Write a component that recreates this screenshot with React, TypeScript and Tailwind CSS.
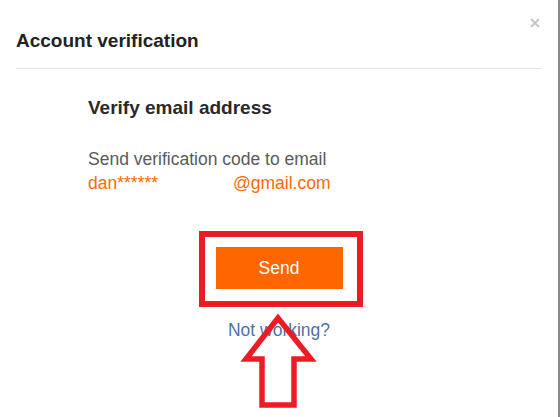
export default function App() {
  return (
    <div className="w-[560px] h-[417px] bg-white font-['Liberation_Sans',Arial,sans-serif] overflow-hidden">
      <div className="relative w-[560px] h-[417px] border-r-2 border-[#8a8a8a]">
        {/* close button */}
        <button className="absolute left-[529px] top-[16px] w-[12px] h-[14px] flex items-center justify-center text-[#c4c4c4]">
          <svg width="10" height="10" viewBox="0 0 10 10">
            <path d="M1 1 L9 9 M9 1 L1 9" stroke="currentColor" strokeWidth="1.8" />
          </svg>
        </button>

        <div className="mx-4 pt-[29px] pb-[15px] border-b border-[#e6e6e6]">
          <h1 className="text-[19px] leading-[24px] font-bold text-[#222]">Account verification</h1>
        </div>

        <div className="pl-[88px] pt-[27px]">
          <h2 className="text-[19px] leading-[24px] font-bold text-[#2a2a2a]">Verify email address</h2>
          <p className="mt-[27px] text-[17.5px] leading-[24px] text-[#5a5a5a]">Send verification code to email</p>
          <p className="text-[17.5px] leading-[24px] text-[#ff6a00] flex">
            <span className="w-[145px]">dan******</span>
            <span>@gmail.com</span>
          </p>
        </div>

        <div className="flex flex-col items-center mt-[36px]">
          <div className="ml-[3px] border-[6px] border-[#ed1c24] pl-[11px] pr-[14px] pt-[10px] pb-[12px]">
            <button className="w-[127px] h-[42px] bg-[#ff6600] text-white text-[17.5px]">Send</button>
          </div>
          <a className="mt-[11px] text-[17.5px] leading-[24px] text-[#4f72a6]">Not working?</a>
        </div>

        {/* annotation arrow */}
        <svg className="absolute left-[240px] top-[305px]" width="80" height="112" viewBox="0 0 80 112">
          <path
            d="M38 13 L71 54 L54 54 L54 100 L22 100 L22 54 L6 54 Z"
            fill="none"
            stroke="#ed1c24"
            strokeWidth="5.5"
            strokeLinejoin="miter"
            strokeMiterlimit="10"
          />
        </svg>
      </div>
    </div>
  );
}
